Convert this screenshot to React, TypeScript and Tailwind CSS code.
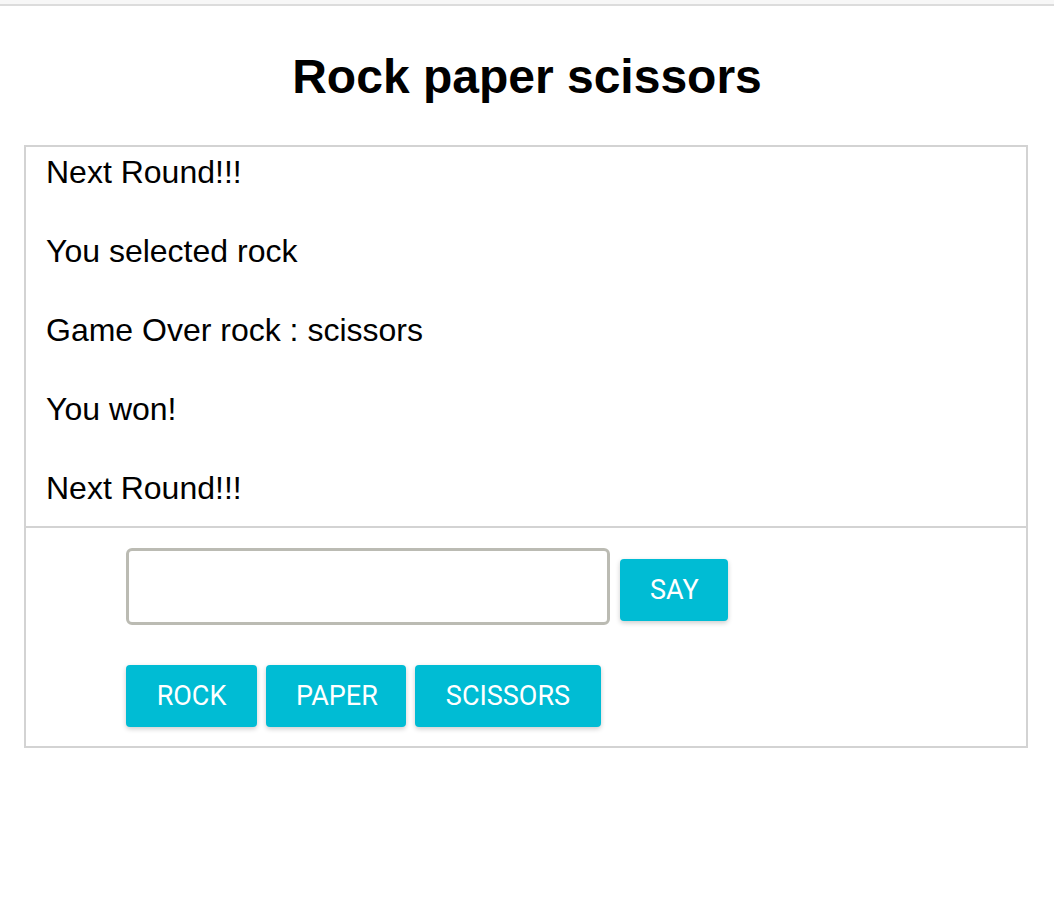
import { useState } from "react";

const MESSAGES = [
  "Next Round!!!",
  "You selected rock",
  "Game Over rock : scissors",
  "You won!",
  "Next Round!!!",
];

const btn =
  "h-[62px] px-[30px] rounded-[4px] bg-[#00bcd4] text-white text-[27px] font-normal uppercase font-['Roboto',sans-serif] shadow-[0_2px_5px_rgba(0,0,0,0.2)]";

export default function App() {
  const [text, setText] = useState("");

  return (
    <div className="min-h-screen bg-white font-['Liberation_Sans',Arial,sans-serif] text-black">
      {/* top strip */}
      <div className="h-[4px] bg-[#f7f7f7]" />
      <div className="h-[2px] bg-[#dcdcdc]" />

      <h2 className="mt-[43px] text-center text-[48px] leading-[56px] font-bold">Rock paper scissors</h2>

      <div className="ml-6 mt-[40px] w-[1004px] border-2 border-[#d3d3d3]">
        <div className="flex flex-col gap-[42px] pl-[20px] pt-[7px] pb-[19px] text-[32px] leading-[37px]">
          {MESSAGES.map((m, i) => (
            <p key={i}>{m}</p>
          ))}
        </div>

        <div className="border-t-2 border-[#d3d3d3] pl-[100px] pt-[20px] pb-[19px]">
          <div className="flex items-start">
            <input
              value={text}
              onChange={(e) => setText(e.target.value)}
              className="w-[484px] h-[77px] rounded-[6px] border-[3px] border-[#bbbbb3] outline-none px-3 text-[26px]"
            />
            <button className={`${btn} ml-[10px] mt-[11px] w-[108px] px-0`}>Say</button>
          </div>
          <div className="flex gap-[9px] mt-[40px]">
            <button className={`${btn} w-[131px] px-0`}>Rock</button>
            <button className={`${btn} w-[140px] px-0`}>Paper</button>
            <button className={`${btn} w-[186px] px-0`}>Scissors</button>
          </div>
        </div>
      </div>
    </div>
  );
}
